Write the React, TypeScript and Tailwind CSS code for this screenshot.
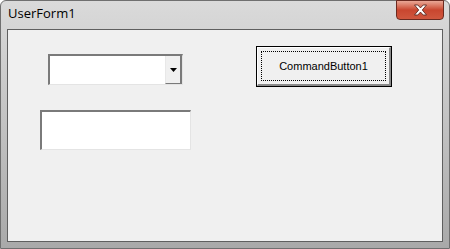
import React from 'react';

const CloseGlyph: React.FC = () => (
  <svg width="15" height="12" viewBox="0 0 15 12">
    <path
      d="M1.5 1 L4.8 1 L7.5 3.9 L10.2 1 L13.5 1 L9.3 6 L13.5 11 L10.2 11 L7.5 8.1 L4.8 11 L1.5 11 L5.7 6 Z"
      fill="#ffffff"
      stroke="#5a2a22"
      strokeWidth="0.9"
      strokeLinejoin="round"
    />
  </svg>
);

const ComboBox: React.FC = () => (
  <div className="flex w-[135px] h-[31px] border-t-2 border-l-2 border-t-[#7a7a7a] border-l-[#7a7a7a] border-r border-b border-r-[#e4e4e4] border-b-[#e4e4e4] bg-white">
    <div className="flex-1" />
    <div className="w-[17px] flex items-center justify-center bg-[#f0f0f0] border-l border-l-[#e8e8e8] border-r-2 border-r-[#7a7a7a] border-b border-b-[#7a7a7a]">
      <svg width="7" height="4" viewBox="0 0 7 4">
        <path d="M0 0 H7 L3.5 4 Z" fill="#000" />
      </svg>
    </div>
  </div>
);

const TextBox: React.FC = () => (
  <div className="w-[151px] h-[40px] bg-white border-t-2 border-l-2 border-t-[#7a7a7a] border-l-[#7a7a7a] border-r border-b border-r-[#e4e4e4] border-b-[#e4e4e4]" />
);

const CommandButton: React.FC = () => (
  <div className="w-[136px] h-[41px] border border-black bg-[#f0f0f0]">
    <div className="h-full border-t border-l border-t-white border-l-white border-r-2 border-b-2 border-r-[#8a8a8a] border-b-[#8a8a8a] p-[3px]">
      <div className="h-full border border-dotted border-black flex items-center justify-center">
        <span className="text-[11px] text-black font-['Liberation_Sans',Arial,sans-serif]">CommandButton1</span>
      </div>
    </div>
  </div>
);

export default function App() {
  return (
    <div className="w-[450px] h-[249px] flex flex-col rounded-t-[6px] border border-[#6f6f6f] bg-gradient-to-b from-[#dadada] via-[#c2c2c2] to-[#a9a9a9] font-['Open_Sans','Noto_Sans',sans-serif]">
      <div className="h-[28px] flex items-start shrink-0">
        <span className="pl-[7px] pt-[3px] text-[13px] text-black leading-[19px]">UserForm1</span>
        <div className="ml-auto mr-[5px] -mt-px w-[48px] h-[20px] rounded-b-[4px] border border-[#6b2a20] bg-gradient-to-b from-[#e9a796] via-[#c9462f] to-[#d0573e] flex items-center justify-center">
          <CloseGlyph />
        </div>
      </div>
      <div className="flex-1 px-[6px] pb-[6px] flex">
        <div className="flex-1 border border-[#5f5f5f] bg-[#f0f0f0] flex">
          <div className="pl-[32px] pt-[24px] flex flex-col">
            <div className="ml-[8px]">
              <ComboBox />
            </div>
            <div className="mt-[25px]">
              <TextBox />
            </div>
          </div>
          <div className="ml-[65px] pt-[16px]">
            <CommandButton />
          </div>
        </div>
      </div>
    </div>
  );
}
